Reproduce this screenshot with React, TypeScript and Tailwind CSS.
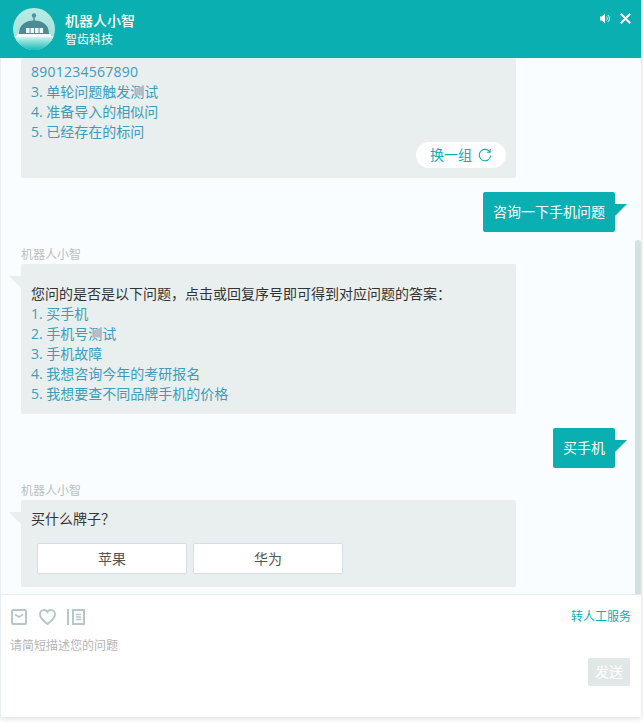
import React from "react";

const TEAL = "#0aafb1";

function Avatar() {
  return (
    <svg width="42" height="42" viewBox="0 0 42 42" className="shrink-0">
      <defs>
        <linearGradient id="av" x1="0" y1="0" x2="0" y2="1">
          <stop offset="0" stopColor="#bdeae4" />
          <stop offset="1" stopColor="#96e0d8" />
        </linearGradient>
        <linearGradient id="bt" x1="0" y1="0" x2="0" y2="1">
          <stop offset="0" stopColor="#dff6f2" />
          <stop offset="0.45" stopColor="#7fdcd4" />
          <stop offset="1" stopColor="#16bdb9" />
        </linearGradient>
        <clipPath id="avc"><circle cx="21" cy="21" r="21" /></clipPath>
      </defs>
      <circle cx="21" cy="21" r="21" fill="url(#av)" />
      <g clipPath="url(#avc)">
        <rect x="0" y="28" width="42" height="14" fill="url(#bt)" />
        <rect x="4" y="26" width="34" height="3" fill="#f0fbf9" />
        <path d="M6 26c0-9 6-13.500 15-13.500s15 4.500 15 13.500z" fill="#4b8a94" />
        <rect x="20.300" y="9" width="1.400" height="5" fill="#4b8a94" />
        <circle cx="21" cy="7.500" r="2.200" fill="#4b959b" />
        <rect x="13" y="20" width="3.600" height="5" fill="#eef6f5" />
        <rect x="17.500" y="20" width="3.600" height="5" fill="#eef6f5" />
        <rect x="22" y="20" width="3.600" height="5" fill="#eef6f5" />
        <rect x="26.500" y="20" width="3.600" height="5" fill="#eef6f5" />
      </g>
    </svg>
  );
}

function Link({ children }: { children: React.ReactNode }) {
  return <div className="text-[#3d9cbb]">{children}</div>;
}

function BotBubble({ children, className, tail = true }: { children: React.ReactNode; className: string; tail?: boolean }) {
  return (
    <div className={`relative ml-5 w-[495px] rounded-[2px] bg-[#e9eeef] px-2.5 ${className}`}>
      {tail && (
        <svg width="12" height="12" className="absolute left-[-12px] top-3">
          <polygon points="0,0 12,0 12,12" fill="#e9eeef" />
        </svg>
      )}
      {children}
    </div>
  );
}

function UserBubble({ children, className }: { children: React.ReactNode; className: string }) {
  return (
    <div className={`relative mr-5 flex h-10 items-center self-end rounded-[2px] bg-[#0aafb1] px-2.5 text-white ${className}`}>
      {children}
      <svg width="12" height="12" className="absolute right-[-12px] top-3">
        <polygon points="0,0 12,0 0,12" fill={TEAL} />
      </svg>
    </div>
  );
}

function Name() {
  return <div className="ml-5 mt-[13px] h-[19px] text-xs leading-5 text-[#bdbdbd]">机器人小智</div>;
}

export default function App() {
  return (
    <div
      className="h-[723px] w-[643px] overflow-hidden bg-white text-sm leading-5 text-[#333]"
      style={{ fontFamily: '"Open Sans", "Noto Sans CJK SC", sans-serif' }}
    >
      <div className="flex h-[717px] w-[641px] flex-col bg-white shadow-[0_1px_6px_rgba(130,150,150,0.35)]">
        <header className="flex h-[58px] shrink-0 items-center bg-[#0aafb1] pl-[13px] pr-2.5 text-white">
          <Avatar />
          <div className="ml-2.5 flex-1">
            <div className="text-sm font-medium leading-5">机器人小智</div>
            <div className="text-xs leading-[17px]">智齿科技</div>
          </div>
          <div className="mb-[22px] flex items-center gap-2.5">
            <svg width="10" height="11" viewBox="0 0 10 11" fill="none">
              <path d="M0 3.500h1.800L5 .5v10L1.800 7.500H0z" fill="#fff" />
              <path d="M6.300 3.500a2.500 2.500 0 0 1 0 4M7.800 2a4.500 4.500 0 0 1 0 7" stroke="#fff" strokeWidth="0.9" />
            </svg>
            <svg width="11" height="11" viewBox="0 0 11 11" fill="none">
              <path d="M.8.8l9.400 9.400M10.200.8L.8 10.200" stroke="#fff" strokeWidth="2" />
            </svg>
          </div>
        </header>

        <div className="relative flex h-[536px] shrink-0 flex-col overflow-hidden border-l border-[#e8eef0] bg-[#f9fdff] pr-[6px]">
          <BotBubble className="pt-1 pb-2.5" tail={false}>
            <Link><span className="tracking-[0.25px]">8901234567890</span></Link>
            <Link>3. 单轮问题触发测试</Link>
            <Link>4. 准备导入的相似问</Link>
            <Link>5. 已经存在的标问</Link>
            <div className="flex justify-end">
              <button className="flex h-[26px] w-[90px] items-center justify-center gap-1.5 rounded-full bg-white text-sm text-[#0aafb1]">
                换一组
                <svg width="14" height="14" viewBox="0 0 13 13" fill="none">
                  <path d="M10.900 3.600A5.300 5.300 0 1 0 11.800 7" stroke={TEAL} strokeWidth="1" />
                  <path d="M11.300 1v3h-3" stroke={TEAL} strokeWidth="1" />
                </svg>
              </button>
            </div>
          </BotBubble>

          <UserBubble className="mt-3.5">咨询一下手机问题</UserBubble>

          <Name />
          <BotBubble className="pt-5 pb-2.5">
            <div>您问的是否是以下问题，点击或回复序号即可得到对应问题的答案：</div>
            <Link>1. 买手机</Link>
            <Link>2. 手机号测试</Link>
            <Link>3. 手机故障</Link>
            <Link>4. 我想咨询今年的考研报名</Link>
            <Link>5. 我想要查不同品牌手机的价格</Link>
          </BotBubble>

          <UserBubble className="mt-3.5">买手机</UserBubble>

          <Name />
          <BotBubble className="h-[87px] pt-[9px]">
            <div>买什么牌子？</div>
            <div className="mt-3.5 ml-1.5 flex gap-1.5">
              <button className="h-[31px] w-[150px] rounded-[2px] border border-[#d5dde6] bg-white text-sm text-[#555]">苹果</button>
              <button className="h-[31px] w-[150px] rounded-[2px] border border-[#d5dde6] bg-white text-sm text-[#555]">华为</button>
            </div>
          </BotBubble>

          <div className="absolute right-0 top-[182px] h-[354px] w-[6px] rounded-t-[3px] bg-[#d5e0e0]" />
        </div>

        <div className="flex flex-1 flex-col border-t border-l border-[#e6edf0] bg-white pl-2.5 pr-2.5">
          <div className="mt-3.5 flex h-[16px] items-center">
            <svg width="16" height="16" viewBox="0 0 16 16" fill="none" stroke="#b5c7c9" strokeWidth="2">
              <rect x="1" y="1" width="14" height="14" rx="1" />
              <path d="M4 5.500l4 2.500 4-2.500" strokeWidth="1.500" />
            </svg>
            <svg className="ml-3" width="17" height="16" viewBox="0 0 17 16" fill="none" stroke="#b5c7c9" strokeWidth="2">
              <path d="M8.500 15C3 11 1 8.300 1 5.300 1 2.800 3 1 5 1c1.500 0 2.800.8 3.500 2C9.200 1.800 10.500 1 12 1c2 0 4 1.800 4 4.300 0 3-2 5.700-7.500 9.700z" />
            </svg>
            <svg className="ml-[11px]" width="18" height="16" viewBox="0 0 18 16" fill="none" stroke="#b5c7c9" strokeWidth="2">
              <path d="M1 0v16" />
              <rect x="6" y="1" width="11" height="14" />
              <path d="M9 5.500h5M9 8h5M9 10.500h5" strokeWidth="1.500" />
            </svg>
            <div className="ml-auto text-xs text-[#0aafb1]">转人工服务</div>
          </div>
          <div className="-ml-px mt-[11px] text-xs leading-5 text-[#b5b5b5]">请简短描述您的问题</div>
          <div className="mr-px mt-0.5 flex justify-end">
            <button className="h-[28px] w-[42px] rounded-[2px] bg-[#e0e7e7] text-sm text-white">发送</button>
          </div>
        </div>
      </div>
    </div>
  );
}
